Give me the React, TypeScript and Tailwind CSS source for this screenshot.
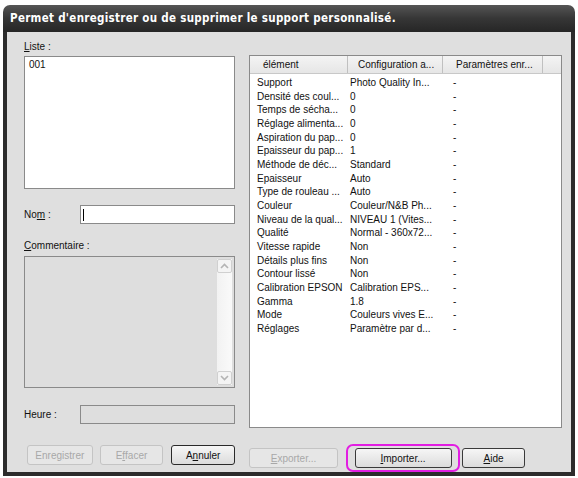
import React from "react";

const rows: [string, string][] = [
  ["Support", "Photo Quality In..."],
  ["Densité des coul...", "0"],
  ["Temps de sécha...", "0"],
  ["Réglage alimenta...", "0"],
  ["Aspiration du pap...", "0"],
  ["Epaisseur du pap...", "1"],
  ["Méthode de déc...", "Standard"],
  ["Epaisseur", "Auto"],
  ["Type de rouleau ...", "Auto"],
  ["Couleur", "Couleur/N&B Ph..."],
  ["Niveau de la qual...", "NIVEAU 1 (Vites..."],
  ["Qualité", "Normal - 360x72..."],
  ["Vitesse rapide", "Non"],
  ["Détails plus fins", "Non"],
  ["Contour lissé", "Non"],
  ["Calibration EPSON", "Calibration EPS..."],
  ["Gamma", "1.8"],
  ["Mode", "Couleurs vives E..."],
  ["Réglages", "Paramètre par d..."],
];

const Btn = ({
  children,
  disabled,
  width,
  strong,
}: {
  children: React.ReactNode;
  disabled?: boolean;
  width: string;
  strong?: boolean;
}) => (
  <div
    className={`${width} h-[20px] rounded-[3px] flex items-center justify-center text-[10px] ${
      disabled
        ? "border border-[#c4c4c4] text-[#a8a8a8] bg-[#e6e6e6]"
        : strong
        ? "border-[1.5px] border-[#2a2a2a] text-[#111] bg-gradient-to-b from-[#f6f6f6] to-[#dcdcdc]"
        : "border border-[#3a3a3a] text-[#111] bg-gradient-to-b from-[#f6f6f6] to-[#dcdcdc]"
    }`}
  >
    {children}
  </div>
);

const Chevron = ({ up }: { up?: boolean }) => (
  <svg width="9" height="6" viewBox="0 0 9 6">
    <path
      d={up ? "M1 5 L4.5 1.5 L8 5" : "M1 1 L4.5 4.5 L8 1"}
      fill="none"
      stroke="#b4b4b4"
      strokeWidth="1.6"
    />
  </svg>
);

export default function App() {
  return (
    <div className="w-[578px] h-[478px] bg-white pt-[5px] pl-[3px] font-['Liberation_Sans',Arial,sans-serif]">
      <div className="w-[572px] h-[471px] flex flex-col">
        <div className="h-[27px] rounded-t-[7px] bg-gradient-to-b from-[#555] via-[#363636] to-[#262626] flex items-center pl-[7px]">
          <span className="text-white font-bold text-[11.5px] tracking-[0.3px] font-['DejaVu_Sans_Condensed','DejaVu_Sans',sans-serif]">
            Permet d'enregistrer ou de supprimer le support personnalisé.
          </span>
        </div>
        <div className="flex-1 bg-[#dfdfdf] border-x-[4px] border-b-[4px] border-[#2c2c2c] flex pl-[17px] text-[10px] text-[#111]">
          <div className="w-[211px] flex flex-col">
            <div className="mt-[8px] h-[13px] leading-[13px]">
              <u>L</u>iste :
            </div>
            <div className="mt-[3px] h-[133px] bg-white border border-[#8a8a8a] px-[4px] pt-[1px] leading-[13px]">
              001
            </div>
            <div className="mt-[16px] h-[19px] flex items-center">
              <span className="w-[56px]">
                No<u>m</u> :
              </span>
              <div className="flex-1 h-[19px] bg-white border border-[#8a8a8a] flex items-center pl-[2px]">
                <div className="w-[1px] h-[12px] bg-black" />
              </div>
            </div>
            <div className="mt-[15px] h-[13px] leading-[13px]">
              <u>C</u>ommentaire :
            </div>
            <div className="mt-[4px] h-[132px] bg-[#dedede] border border-[#8a8a8a] flex justify-end p-[2px]">
              <div className="w-[15px] h-full bg-gradient-to-r from-[#f2f2f2] to-[#fafafa] flex flex-col justify-between">
                <div className="h-[14px] border border-[#d0d0d0] rounded-[2px] bg-[#f4f4f4] flex items-center justify-center">
                  <Chevron up />
                </div>
                <div className="h-[14px] border border-[#d0d0d0] rounded-[2px] bg-[#f4f4f4] flex items-center justify-center">
                  <Chevron />
                </div>
              </div>
            </div>
            <div className="mt-[17px] h-[19px] flex items-center">
              <span className="w-[56px]">Heure :</span>
              <div className="flex-1 h-[19px] bg-[#dedede] border border-[#8a8a8a]" />
            </div>
            <div className="mt-[21px] flex items-center">
              <Btn disabled width="w-[66px] ml-[3px]">
                Enre<u>g</u>istrer
              </Btn>
              <Btn disabled width="w-[64px] ml-[7px]">
                E<u>f</u>facer
              </Btn>
              <Btn strong width="w-[64px] ml-[8px]">
                A<u>n</u>nuler
              </Btn>
            </div>
          </div>
          <div className="ml-[14px] w-[313px] flex flex-col">
            <div className="mt-[23px] h-[373px] bg-white border border-[#8a8a8a] flex flex-col">
              <div className="h-[18px] flex bg-gradient-to-b from-[#f4f4f4] to-[#e6e6e6] border-b border-[#c8c8c8]">
                <div className="w-[98px] border-r border-[#c0c0c0] pl-[13px] flex items-center">élément</div>
                <div className="w-[95px] border-r border-[#c0c0c0] pl-[10px] flex items-center">Configuration a...</div>
                <div className="w-[100px] border-r border-[#c0c0c0] pl-[13px] flex items-center">Paramètres enr...</div>
                <div className="flex-1" />
              </div>
              <div className="pt-[2px]">
                {rows.map(([a, b]) => (
                  <div key={a} className="flex h-[13.67px] leading-[13.67px]">
                    <div className="w-[100px] pl-[7px] whitespace-nowrap">{a}</div>
                    <div className="w-[103px] whitespace-nowrap">{b}</div>
                    <div className="flex-1">-</div>
                  </div>
                ))}
              </div>
            </div>
            <div className="mt-[16px] flex items-center">
              <Btn disabled width="w-[89px]">
                <span>
                  <u>E</u>xporter...
                </span>
              </Btn>
              <div className="ml-[8px] w-[114px] h-[28px] rounded-[7px] border-[2px] border-[#e21ee2] flex items-center justify-center">
                <Btn width="w-[97px]">
                  <span>
                    <u>I</u>mporter...
                  </span>
                </Btn>
              </div>
              <Btn width="w-[63px] ml-[2px]">
                <span>
                  <u>A</u>ide
                </span>
              </Btn>
            </div>
          </div>
        </div>
      </div>
    </div>
  );
}
